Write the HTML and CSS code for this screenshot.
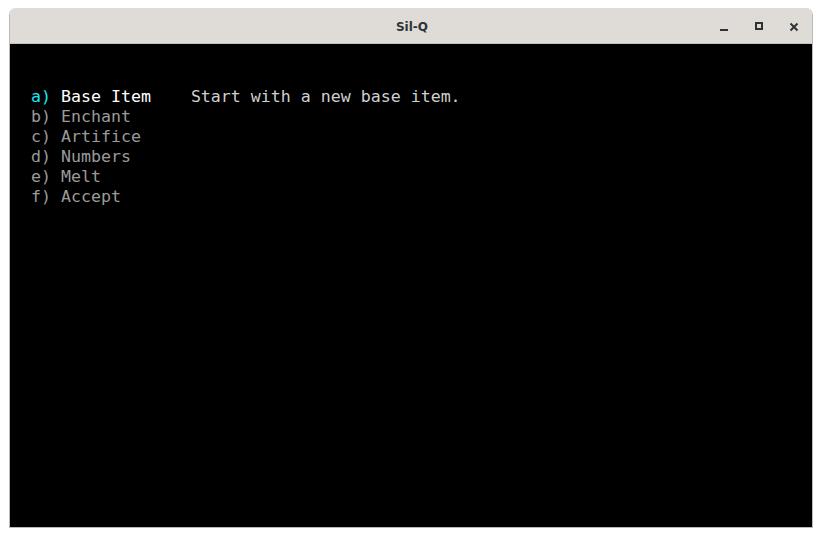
FILE: index.html
```html
<!DOCTYPE html>
<html lang="en">
<head>
    <meta charset="UTF-8">
    <title>Sil-Q</title>
    <link rel="stylesheet" href="styles.css">
</head>
<body>
    <div class="window">
        <div class="titlebar">
            <span class="title">Sil-Q</span>
            <div class="controls">
                <span class="btn">
                    <svg width="10" height="10" viewBox="0 0 10 10"><rect x="1" y="7" width="8" height="2" fill="#2e3436"/></svg>
                </span>
                <span class="btn">
                    <svg width="10" height="10" viewBox="0 0 10 10"><rect x="2" y="1" width="6" height="6" fill="none" stroke="#2e3436" stroke-width="2"/></svg>
                </span>
                <span class="btn">
                    <svg width="10" height="10" viewBox="0 0 10 10"><path d="M1.5 1.5 L8.5 8.5 M8.5 1.5 L1.5 8.5" stroke="#2e3436" stroke-width="2"/></svg>
                </span>
            </div>
        </div>
        <div class="term">
            <div class="row"><span class="key active-key">a)</span> <span class="label active">Base Item</span>    <span class="desc">Start with a new base item.</span></div>
            <div class="row"><span class="key">b)</span> <span class="label">Enchant</span></div>
            <div class="row"><span class="key">c)</span> <span class="label">Artifice</span></div>
            <div class="row"><span class="key">d)</span> <span class="label">Numbers</span></div>
            <div class="row"><span class="key">e)</span> <span class="label">Melt</span></div>
            <div class="row"><span class="key">f)</span> <span class="label">Accept</span></div>
        </div>
    </div>
</body>
</html>
```

FILE: styles.css
```css
body {
    margin: 0;
    background: #ffffff;
    font-family: "DejaVu Sans", sans-serif;
}

.window {
    margin: 8px 0 0 9px;
    width: 802px;
    border: 1px solid #bcbab6;
    border-top: none;
    border-radius: 7px 7px 0 0;
    overflow: hidden;
}

.titlebar {
    height: 35px;
    background: #dfdcd8;
    border-bottom: 1px solid #c6c3bf;
    display: flex;
    align-items: center;
    justify-content: center;
    position: relative;
}

.title {
    font-size: 12px;
    font-weight: bold;
    color: #2e3436;
    margin-left: 2px;
    margin-top: 2px;
}

.controls {
    position: absolute;
    right: 13px;
    top: 14px;
    display: flex;
    gap: 25px;
}

.btn {
    width: 10px;
    height: 10px;
    display: block;
}

.btn svg {
    display: block;
}

.term {
    background: #000000;
    height: 483px;
    padding: 43px 0 0 21px;
    box-sizing: border-box;
    font-family: "DejaVu Sans Mono", monospace;
    font-size: 16.6px;
    line-height: 20px;
    color: #9a9a9a;
}

.row {
    height: 20px;
    white-space: pre;
}

.active-key {
    color: #1ee6f0;
}

.active {
    color: #ffffff;
}

.desc {
    color: #cfcfcf;
}
```
